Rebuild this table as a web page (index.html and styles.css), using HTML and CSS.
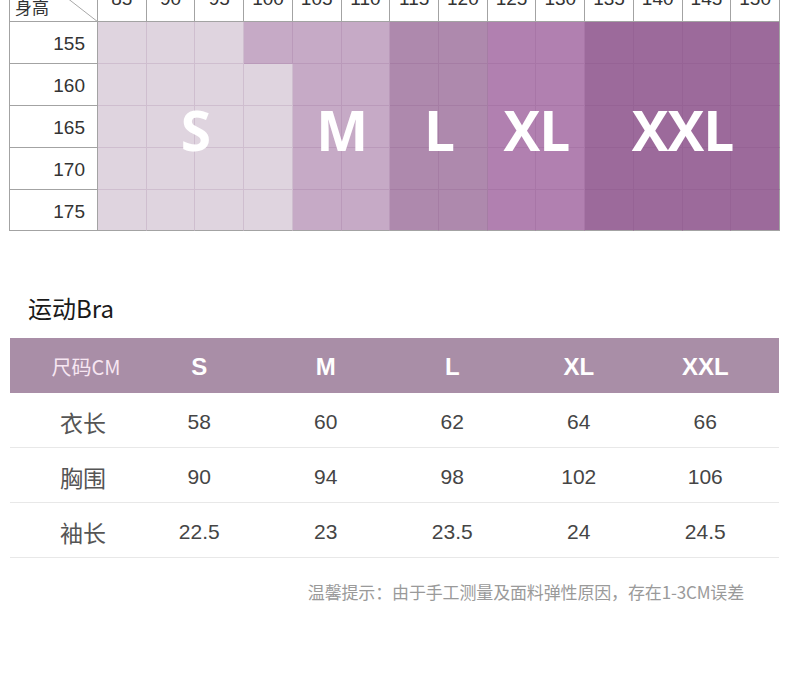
FILE: index.html
```html
<!DOCTYPE html>
<html lang="zh">
<head>
<meta charset="utf-8">
<link rel="stylesheet" href="styles.css">
</head>
<body>
<div class="chart-wrap">
  <div class="chart">
    <div class="corner">
      <svg class="diag" viewBox="0 0 88 42" preserveAspectRatio="none"><line x1="34" y1="0" x2="88" y2="42" stroke="#a8a8a8" stroke-width="1"/></svg>
      <span class="corner-text">身高</span>
    </div>
    <div class="hd">85</div><div class="hd">90</div><div class="hd">95</div><div class="hd">100</div><div class="hd">105</div><div class="hd">110</div><div class="hd">115</div><div class="hd">120</div><div class="hd">125</div><div class="hd">130</div><div class="hd">135</div><div class="hd">140</div><div class="hd">145</div><div class="hd">150</div>

    <div class="rl">155</div>
    <div class="c s"></div><div class="c s"></div><div class="c s"></div><div class="c m"></div><div class="c m"></div><div class="c m"></div><div class="c l"></div><div class="c l"></div><div class="c xl"></div><div class="c xl"></div><div class="c xxl"></div><div class="c xxl"></div><div class="c xxl"></div><div class="c xxl"></div>

    <div class="rl">160</div>
    <div class="c s"></div><div class="c s"></div><div class="c s"></div><div class="c s"></div><div class="c m"></div><div class="c m"></div><div class="c l"></div><div class="c l"></div><div class="c xl"></div><div class="c xl"></div><div class="c xxl"></div><div class="c xxl"></div><div class="c xxl"></div><div class="c xxl"></div>

    <div class="rl">165</div>
    <div class="c s"></div><div class="c s"></div><div class="c s"></div><div class="c s"></div><div class="c m"></div><div class="c m"></div><div class="c l"></div><div class="c l"></div><div class="c xl"></div><div class="c xl"></div><div class="c xxl"></div><div class="c xxl"></div><div class="c xxl"></div><div class="c xxl"></div>

    <div class="rl">170</div>
    <div class="c s"></div><div class="c s"></div><div class="c s"></div><div class="c s"></div><div class="c m"></div><div class="c m"></div><div class="c l"></div><div class="c l"></div><div class="c xl"></div><div class="c xl"></div><div class="c xxl"></div><div class="c xxl"></div><div class="c xxl"></div><div class="c xxl"></div>

    <div class="rl">175</div>
    <div class="c s"></div><div class="c s"></div><div class="c s"></div><div class="c s"></div><div class="c m"></div><div class="c m"></div><div class="c l"></div><div class="c l"></div><div class="c xl"></div><div class="c xl"></div><div class="c xxl"></div><div class="c xxl"></div><div class="c xxl"></div><div class="c xxl"></div>
  </div>
  <div class="labels">
    <div class="big big-s">S</div>
    <div class="big big-m">M</div>
    <div class="big big-l">L</div>
    <div class="big big-xl">XL</div>
    <div class="big big-xxl">XXL</div>
  </div>
</div>

<h2 class="title">运动Bra</h2>

<div class="table">
  <div class="trow thead">
    <div class="tc first">尺码CM</div>
    <div class="tc size">S</div>
    <div class="tc size">M</div>
    <div class="tc size">L</div>
    <div class="tc size">XL</div>
    <div class="tc size">XXL</div>
  </div>
  <div class="trow">
    <div class="tc first lbl">衣长</div>
    <div class="tc">58</div><div class="tc">60</div><div class="tc">62</div><div class="tc">64</div><div class="tc">66</div>
  </div>
  <div class="trow">
    <div class="tc first lbl">胸围</div>
    <div class="tc">90</div><div class="tc">94</div><div class="tc">98</div><div class="tc">102</div><div class="tc">106</div>
  </div>
  <div class="trow">
    <div class="tc first lbl">袖长</div>
    <div class="tc">22.5</div><div class="tc">23</div><div class="tc">23.5</div><div class="tc">24</div><div class="tc">24.5</div>
  </div>
</div>

<p class="note">温馨提示：由于手工测量及面料弹性原因，存在1-3CM误差</p>
</body>
</html>
```

FILE: styles.css
```css
* { box-sizing: border-box; }

html, body {
  margin: 0;
  padding: 0;
  background: #ffffff;
}

body {
  width: 790px;
  font-family: "Liberation Sans", Arial, sans-serif;
  color: #333;
}

.chart-wrap {
  position: relative;
  margin: -20px 0 0 9px;
  width: 771px;
}

.chart {
  display: grid;
  grid-template-columns: 88px repeat(14, 1fr);
  grid-template-rows: 42px repeat(4, 42px) 41px;
  border-left: 1px solid #a3a3a3;
  background: #ffffff;
}

.corner {
  position: relative;
  border-right: 1px solid #a3a3a3;
  border-bottom: 1px solid #a3a3a3;
}

.diag {
  position: absolute;
  left: 0;
  top: 0;
  width: 88px;
  height: 42px;
}

.corner-text {
  position: absolute;
  left: 5px;
  bottom: 4px;
  font-family: "Noto Sans CJK SC", sans-serif;
  font-size: 17px;
  line-height: 20px;
  color: #333;
}

.hd {
  display: flex;
  align-items: center;
  justify-content: center;
  padding-bottom: 4px;
  font-size: 19px;
  color: #333;
  border-right: 1px solid #a3a3a3;
  border-bottom: 1px solid #a3a3a3;
}

.rl {
  display: flex;
  align-items: center;
  justify-content: flex-end;
  padding-right: 12px;
  padding-top: 3px;
  font-size: 19px;
  color: #333;
  border-right: 1px solid #a3a3a3;
  border-bottom: 1px solid #a3a3a3;
}

.c {
  border-right: 1px solid rgba(110, 60, 110, 0.14);
  border-bottom: 1px solid rgba(110, 60, 110, 0.14);
}

.chart > .c:nth-child(15n + 15),
.chart > .c:nth-last-child(1) {
  border-right-color: #a3a3a3;
}

.chart > :nth-last-child(-n + 15) {
  border-bottom-color: #a3a3a3;
}

.s { background: #dfd4df; }
.m { background: #c6aac6; }
.l { background: #ae89ad; }
.xl { background: #b180b0; }
.xxl { background: #9c6a9b; }

.labels {
  position: absolute;
  left: 89px;
  right: 0;
  top: 42px;
  bottom: 0;
  display: grid;
  grid-template-columns: repeat(14, 1fr);
  pointer-events: none;
}

.big {
  grid-row: 1;
  display: flex;
  align-items: center;
  justify-content: center;
  padding-top: 6px;
  font-family: "Open Sans", sans-serif;
  font-weight: 700;
  font-size: 55px;
  color: #ffffff;
  letter-spacing: -1px;
}

.big-s { grid-column: 1 / 5; }
.big-m { grid-column: 5 / 7; }
.big-l { grid-column: 7 / 9; }
.big-xl { grid-column: 9 / 11; }
.big-xxl { grid-column: 11 / 15; }

.title {
  margin: 62px 0 15px 28px;
  font-family: "Noto Sans CJK SC", sans-serif;
  font-weight: 400;
  font-size: 24px;
  line-height: 30px;
  color: #1a1a1a;
}

.table {
  margin-left: 10px;
  width: 769px;
}

.trow {
  display: grid;
  grid-template-columns: 126px repeat(5, 126.5px) 1fr;
  height: 55px;
  padding-top: 4px;
  border-bottom: 1px solid #e8e8e8;
  align-items: center;
}

.thead {
  background: #a98ea7;
  border-bottom: none;
  padding-top: 2px;
}

.tc {
  text-align: center;
  font-size: 21px;
  color: #454545;
}

.tc.first {
  padding-left: 26px;
  text-align: center;
}

.thead .tc.first {
  font-family: "Noto Sans CJK SC", sans-serif;
  font-size: 20px;
  color: #f7e6f2;
}

.thead .size {
  font-weight: 700;
  font-size: 24px;
  color: #ffffff;
}

.lbl {
  font-family: "Noto Sans CJK SC", sans-serif;
  font-size: 23px;
  color: #555;
  padding-left: 20px;
  padding-right: 0;
}

.tc.first.lbl {
  padding-left: 20px;
}

.note {
  margin: 22px 46px 0 0;
  text-align: right;
  font-family: "Noto Sans CJK SC", sans-serif;
  font-size: 17px;
  line-height: 24px;
  letter-spacing: -0.15px;
  color: #9a9a9a;
}
```
